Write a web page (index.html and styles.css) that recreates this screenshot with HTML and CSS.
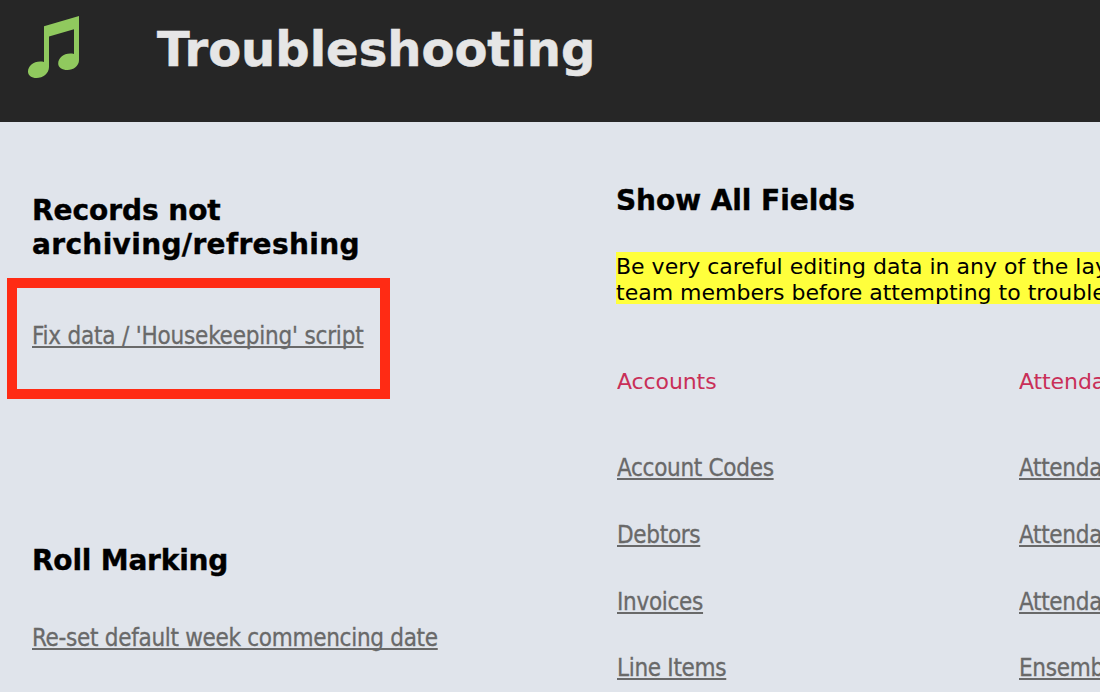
FILE: index.html
```html
<!DOCTYPE html>
<html lang="en">
<head>
    <meta charset="UTF-8">
    <meta name="viewport" content="width=device-width, initial-scale=1.0">
    <title>Troubleshooting</title>
    <link rel="stylesheet" href="styles.css">
</head>

<body>
    <header class="header">
        <svg class="logo" width="52" height="63" viewBox="0 0 52 63">
            <path d="M16 10.300 51 0V44C51 50 45.500 54 39.500 54C34 54 30.200 51.500 30.200 47.500C30.200 41.500 37 36 46 38V13.300L21 20.500V51C21 57.500 15 62 8.500 62C3.500 62 0 59.500 0 55.500C0 49.500 7 44 16 46Z" fill="#90c95e"/>
        </svg>
        <h1>Troubleshooting</h1>
    </header>

    <main class="container">
        <section class="scripts">
            <h2>Records not<br><span class="wide">archiving/refreshing</span></h2>
            <div class="highlight-box">
                <a class="fix-link" href="#">Fix data / 'Housekeeping' script</a>
            </div>
            <h2 class="roll">Roll Marking</h2>
            <a class="reset-link" href="#">Re-set default week commencing date</a>
        </section>

        <section class="fields">
            <h2>Show All Fields</h2>
            <p class="warning">Be very careful editing data in any of the layouts<br>team members before attempting to troubleshoot</p>
            <div class="tables">
                <div class="group">
                    <h3>Accounts</h3>
                    <ul>
                        <li><a href="#">Account Codes</a></li>
                        <li><a href="#">Debtors</a></li>
                        <li><a href="#">Invoices</a></li>
                        <li><a href="#">Line Items</a></li>
                    </ul>
                </div>
                <div class="group">
                    <h3>Attendance</h3>
                    <ul>
                        <li><a href="#">Attendance</a></li>
                        <li><a href="#">Attendance</a></li>
                        <li><a href="#">Attendance</a></li>
                        <li><a href="#">Ensembles</a></li>
                    </ul>
                </div>
            </div>
        </section>
    </main>
</body>
</html>
```

FILE: styles.css
```css
body {
    margin: 0;
    height: 692px;
    overflow: hidden;
    background-color: #e0e4eb;
    color: #000;
    font-family: Verdana, "DejaVu Sans", sans-serif;
}

.header {
    display: flex;
    align-items: flex-start;
    box-sizing: border-box;
    height: 122px;
    padding: 16px 28px 0;
    background-color: #262626;
}

h1 {
    margin: 3px 0 0 77px;
    color: #e6e6e6;
    font-size: 48px;
    line-height: 60px;
    -webkit-text-stroke: 0.5px #e6e6e6;
}

h2 {
    margin: 0;
    font-size: 28px;
    line-height: 34px;
    letter-spacing: -0.05px;
    -webkit-text-stroke: 0.4px #000;
}

.wide {
    letter-spacing: 0.35px;
}

a {
    display: inline-block;
    color: #696969;
    font-family: Tahoma, "DejaVu Sans Condensed", "DejaVu Sans", sans-serif;
    font-stretch: condensed;
    font-size: 24px;
    line-height: 30px;
    letter-spacing: -0.3px;
    white-space: nowrap;
    text-decoration: underline;
    text-decoration-thickness: 2px;
    text-decoration-skip-ink: none;
    text-underline-offset: 2px;
    -webkit-text-stroke: 0.3px #696969;
}

.fix-link {
    letter-spacing: -0.2px;
}

.container {
    display: grid;
    grid-template-columns: 584px 484px;
    padding-left: 32px;
}

.scripts {
    padding-top: 72px;
}

.highlight-box {
    box-sizing: border-box;
    width: 383px;
    height: 121px;
    margin: 16px 0 0 -25px;
    padding: 33px 15px 0;
    border: 10px solid #ff2b14;
}

.roll {
    margin: 145px 0 45px;
    letter-spacing: -0.2px;
}

.fields {
    padding-top: 62px;
    overflow: hidden;
}

.warning {
    height: 50px;
    margin: 34px 0 0;
    padding-top: 2px;
    overflow: hidden;
    background-color: #ffff3c;
    font-size: 22px;
    line-height: 26px;
    white-space: nowrap;
}

.tables {
    display: grid;
    grid-template-columns: 402px 81px;
    margin-top: 64px;
    padding-left: 1px;
}

.group {
    overflow: hidden;
}

h3 {
    margin: 0 0 57px;
    color: #c92f58;
    font-size: 22px;
    font-weight: normal;
    line-height: 28px;
    letter-spacing: -0.1px;
}

ul {
    margin: 0;
    padding: 0;
    list-style-type: none;
}

li {
    height: 66.75px;
}
```
